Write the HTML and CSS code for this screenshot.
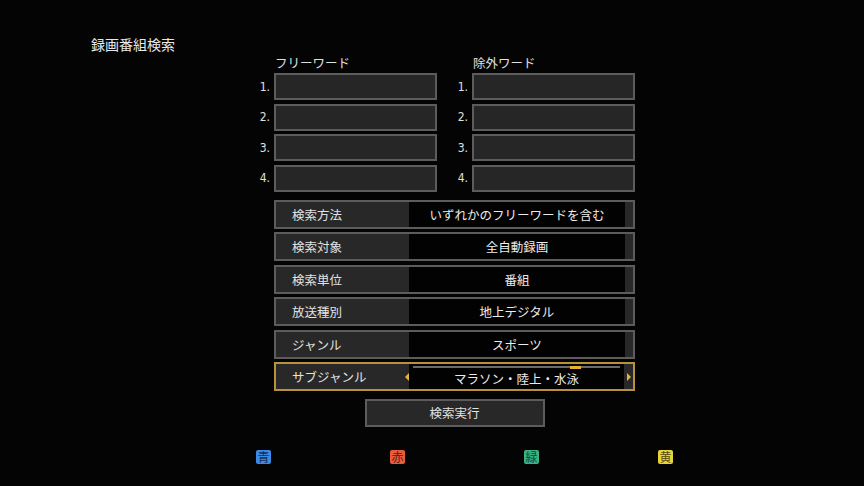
FILE: index.html
```html
<!DOCTYPE html>
<html lang="ja">
<head>
<meta charset="utf-8">
<title>録画番組検索</title>
<link rel="stylesheet" href="styles.css">
</head>
<body>
<div class="screen">
  <h1 class="title">録画番組検索</h1>
  <div class="panel">
    <div class="words">
      <div class="wcol">
        <div class="whead">フリーワード</div>
        <div class="wlist">
          <div class="wrow"><span class="num">1.</span><div class="wbox"></div></div>
          <div class="wrow"><span class="num">2.</span><div class="wbox"></div></div>
          <div class="wrow"><span class="num">3.</span><div class="wbox"></div></div>
          <div class="wrow"><span class="num">4.</span><div class="wbox"></div></div>
        </div>
      </div>
      <div class="wcol">
        <div class="whead">除外ワード</div>
        <div class="wlist">
          <div class="wrow"><span class="num">1.</span><div class="wbox"></div></div>
          <div class="wrow"><span class="num">2.</span><div class="wbox"></div></div>
          <div class="wrow"><span class="num">3.</span><div class="wbox"></div></div>
          <div class="wrow"><span class="num">4.</span><div class="wbox"></div></div>
        </div>
      </div>
    </div>
    <div class="rows">
      <div class="row"><div class="rlabel">検索方法</div><div class="rval">いずれかのフリーワードを含む</div></div>
      <div class="row"><div class="rlabel">検索対象</div><div class="rval">全自動録画</div></div>
      <div class="row"><div class="rlabel">検索単位</div><div class="rval">番組</div></div>
      <div class="row"><div class="rlabel">放送種別</div><div class="rval">地上デジタル</div></div>
      <div class="row"><div class="rlabel">ジャンル</div><div class="rval">スポーツ</div></div>
      <div class="row sel">
        <div class="rlabel short">サブジャンル</div>
        <div class="arrbox"><span class="arr left"></span></div>
        <div class="rval col">
          <div class="bar"><span class="knob"></span></div>
          <div class="valtext">マラソン・陸上・水泳</div>
        </div>
        <div class="arrbox wide"><span class="arr right"></span></div>
      </div>
    </div>
    <div class="btnwrap"><div class="btn">検索実行</div></div>
  </div>
  <div class="keys">
    <span class="key blue">青</span>
    <span class="key red">赤</span>
    <span class="key green">緑</span>
    <span class="key yellow">黄</span>
  </div>
</div>
</body>
</html>
```

FILE: styles.css
```css
html, body {
  margin: 0;
  padding: 0;
  background: #040404;
}
body {
  width: 864px;
  height: 486px;
  overflow: hidden;
  font-family: "Noto Sans CJK JP", "Noto Sans", sans-serif;
  color: #e4e4e4;
}
.screen {
  padding-top: 36px;
}
.title {
  margin: 0 0 0 91px;
  font-size: 14px;
  font-weight: normal;
  line-height: 16px;
  height: 16px;
  color: #e8e8e8;
}
.panel {
  margin-left: 258px;
  margin-top: 3px;
  width: 377px;
}
.words {
  display: flex;
  gap: 19px;
}
.wcol {
  display: flex;
  flex-direction: column;
}
.whead {
  font-size: 12.5px;
  line-height: 16px;
  height: 16px;
  padding-left: 17px;
  margin-bottom: 2px;
  color: #e0e0e0;
}
.wlist {
  display: flex;
  flex-direction: column;
  gap: 3.5px;
}
.wrow {
  display: flex;
  align-items: center;
}
.num {
  width: 16px;
  box-sizing: border-box;
  padding-right: 4px;
  text-align: right;
  font-family: "Liberation Sans Narrow", "DejaVu Sans Condensed", "Noto Sans CJK JP", sans-serif;
  font-size: 12px;
  color: #e0e0e0;
}
.wbox {
  width: 163px;
  height: 27px;
  box-sizing: border-box;
  border: 2px solid #5c5c5c;
  background: #262626;
}
.rows {
  margin-top: 8.5px;
  margin-left: 16px;
  width: 361px;
  display: flex;
  flex-direction: column;
  gap: 3.4px;
}
.row {
  display: flex;
  height: 29px;
  box-sizing: border-box;
  border: 2px solid #5c5c5c;
  background: #282828;
  font-size: 12.5px;
  line-height: 25px;
}
.rlabel {
  flex: 0 0 133px;
  box-sizing: border-box;
  padding-left: 16px;
  color: #e2e2e2;
}
.rlabel.short {
  flex-basis: 128px;
}
.rval {
  flex: 0 0 216px;
  background: #020202;
  text-align: center;
  color: #ececec;
}
.rval.col {
  flex-basis: 215px;
  display: flex;
  flex-direction: column;
}
.row.sel {
  border-color: #b8923a;
}
.arrbox {
  flex: 0 0 5px;
  display: flex;
  align-items: center;
  justify-content: center;
}
.arrbox.wide {
  flex-basis: 9px;
}
.arr {
  width: 0;
  height: 0;
  border-top: 4px solid transparent;
  border-bottom: 4px solid transparent;
  margin-top: 2px;
}
.arr.left {
  border-right: 4px solid #e6b43a;
}
.arr.right {
  border-left: 4px solid #e6b43a;
}
.bar {
  margin: 2px 4px 0;
  height: 2px;
  background: #6a6a6a;
  display: flex;
  justify-content: flex-start;
}
.knob {
  margin-left: 157px;
  width: 11px;
  height: 3px;
  background: #e8b030;
}
.valtext {
  flex: 1;
  display: flex;
  align-items: center;
  justify-content: center;
  line-height: 16px;
  padding-top: 1px;
}
.btnwrap {
  display: flex;
  justify-content: center;
  margin-left: 16px;
  width: 361px;
  margin-top: 8px;
}
.btn {
  width: 180px;
  height: 28px;
  box-sizing: border-box;
  border: 2px solid #5c5c5c;
  background: #282828;
  text-align: center;
  font-size: 12.5px;
  line-height: 24px;
  color: #e2e2e2;
}
.keys {
  display: flex;
  gap: 119px;
  margin-left: 256px;
  margin-top: 23px;
}
.key {
  width: 15px;
  height: 14px;
  border-radius: 2px;
  font-size: 12px;
  line-height: 14px;
  text-align: center;
}
.key.blue { background: #3d8ae6; color: #10305c; }
.key.red { background: #e85c3c; color: #5a1a10; }
.key.green { background: #3cb386; color: #0f4a32; }
.key.yellow { background: #e6d43a; color: #5a4a08; }
```
